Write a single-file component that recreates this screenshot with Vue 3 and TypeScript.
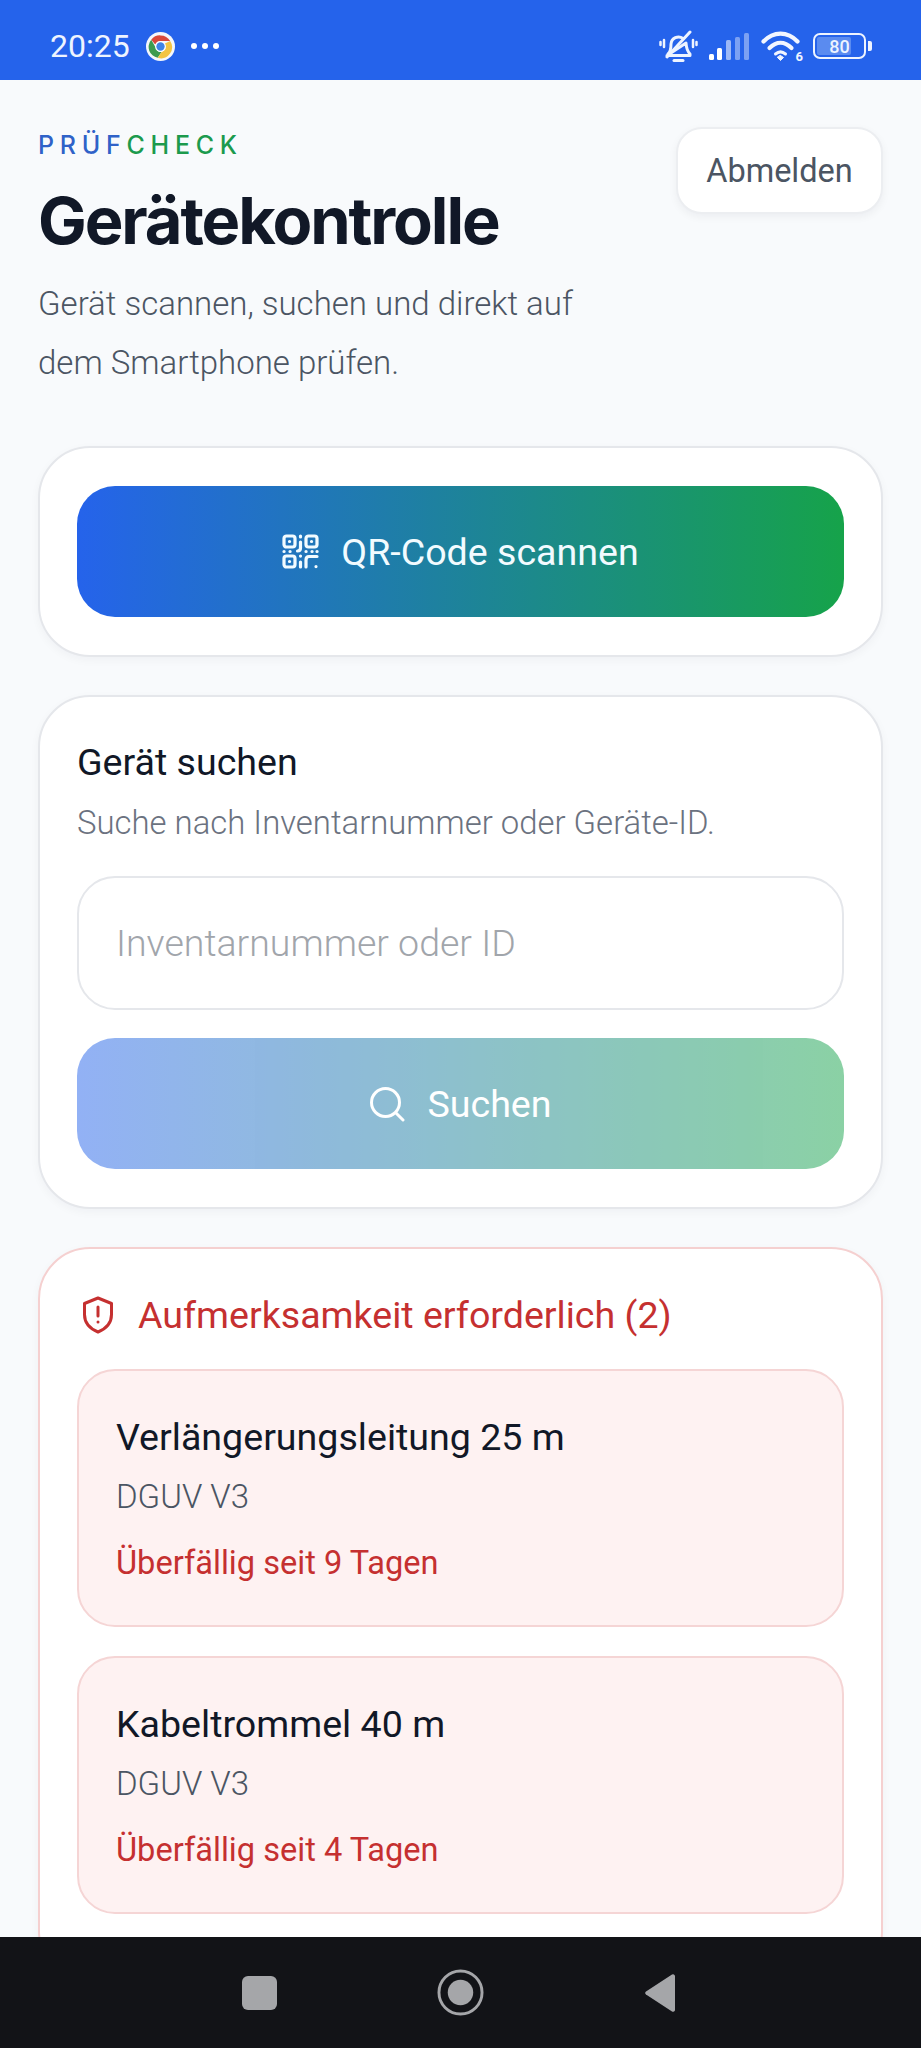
<template>
  <div class="phone">
    <div class="status-bar">
      <div class="status-left">
        <span class="clock">20:25</span>
        <svg class="chrome" viewBox="0 0 30 30" width="29" height="29">
          <circle cx="15" cy="15" r="15" fill="#f4f7fb" />
          <path d="M15 3.500a11.500 11.500 0 0 1 10 5.800H15a5.800 5.800 0 0 0-5.400 3.600L5.400 8A11.500 11.500 0 0 1 15 3.500z" fill="#d9483b" />
          <path d="M5.400 8l5 8.700a5.800 5.800 0 0 0 5.700 4l-4 6A11.500 11.500 0 0 1 5.400 8z" fill="#3d9b4f" />
          <path d="M25 9.300a11.500 11.500 0 0 1-12.900 17.400l4-6a5.800 5.800 0 0 0 4-6.500 5.800 5.800 0 0 0-1-2.100z" fill="#f3c443" />
          <circle cx="15" cy="15" r="5.600" fill="#fff" />
          <circle cx="15" cy="15" r="4.300" fill="#3f83e6" />
        </svg>
        <span class="dots"><i></i><i></i><i></i></span>
      </div>
      <div class="status-right">
        <svg viewBox="0 0 39 33" width="39" height="33" fill="none" stroke="#eef4ff" stroke-width="3" stroke-linecap="round" stroke-linejoin="round">
          <path d="M9 24c2.500-2 3-5 3-10a7.500 7.500 0 0 1 12-5.500M27 13c.3 4 1 8 4 11v1.500H8z" />
          <path d="M15 30.500h9" />
          <path d="M8 27 31 2" />
          <path d="M5 10v7M1.500 12v3M34 10v7M37.500 12v3" stroke-width="2.500" />
        </svg>
        <svg viewBox="0 0 41 27" width="41" height="27" fill="#fff">
          <rect x="0" y="21" width="5" height="6" rx="1.500" />
          <rect x="8" y="15" width="5" height="12" rx="1.500" />
          <rect x="17" y="7" width="5" height="20" rx="1.500" opacity=".55" />
          <rect x="26" y="4" width="5" height="23" rx="1.500" opacity=".4" />
          <rect x="35" y="0" width="5" height="27" rx="1.500" opacity=".4" />
        </svg>
        <span class="wifi">
          <svg viewBox="0 0 39 30" width="39" height="30" fill="none" stroke="#f2f6ff" stroke-width="4.200" stroke-linecap="round">
            <path d="M2.500 10.500c10-10.500 24-10.500 34 0" />
            <path d="M8.500 17c7-7 15-7 22 0" />
            <path d="M14.500 23c3.500-3 6.500-3 10 0" stroke-width="3" />
            <path d="M16.500 26.500l3 3 3-3-3-2z" fill="#f2f6ff" stroke-width="1" />
          </svg>
          <span class="wifi-num">6</span>
        </span>
        <span class="battery">
          <span class="battery-body">
            <span class="battery-fill"></span>
            <span class="battery-num">80</span>
          </span>
          <i class="battery-tip"></i>
        </span>
      </div>
    </div>

    <main class="page">
      <header class="head">
        <div class="head-text">
          <p class="brand"><span class="brand-blue">PRÜF</span><span class="brand-green">CHECK</span></p>
          <h1>Gerätekontrolle</h1>
          <p class="lead">Gerät scannen, suchen und direkt auf dem Smartphone prüfen.</p>
        </div>
        <button class="logout">Abmelden</button>
      </header>

      <section class="card">
        <button class="action scan">
          <svg viewBox="0 0 37 35" width="37" height="35" fill="none" stroke="#f2fbff" stroke-width="3.200" stroke-linecap="round" stroke-linejoin="round">
            <rect x="2" y="2" width="11" height="11" rx="2.500" />
            <rect x="24" y="2" width="11" height="11" rx="2.500" />
            <rect x="2" y="22" width="11" height="11" rx="2.500" />
            <path d="M7.500 7.500h.1M29.500 7.500h.1M7.500 27.500h.1" />
            <path d="M18.500 2v1M18.500 8v6c0 2-1 3-3 3M2 17.500h.1M8 17.500h.1M24 17.500h.1M30 17.500h.1M35 17.500h.1M18.500 22v.1M18.500 28v5M24 33v-7c0-2 1-3.500 3-3.500h8M34 32.500v.1" />
          </svg>
          QR-Code scannen
        </button>
      </section>

      <section class="card">
        <h2>Gerät suchen</h2>
        <p class="hint">Suche nach Inventarnummer oder Geräte-ID.</p>
        <input class="field" type="text" placeholder="Inventarnummer oder ID" />
        <button class="action find">
          <svg viewBox="0 0 36 36" width="36" height="36" fill="none" stroke="#fff" stroke-width="3" stroke-linecap="round">
            <circle cx="16.500" cy="16.500" r="14" />
            <path d="M27 27l7 7" />
          </svg>
          Suchen
        </button>
      </section>

      <section class="card alert">
        <h2 class="alert-title">
          <svg viewBox="0 0 32 38" width="32" height="38" fill="none" stroke="#c53030" stroke-width="3" stroke-linecap="round" stroke-linejoin="round">
            <path d="M16 2l13.500 5.500v11c0 8.500-5 14-13.500 17.500C7.500 32.500 2.500 27 2.500 18.500v-11z" />
            <path d="M16 11v9M16 26v.1" />
          </svg>
          Aufmerksamkeit erforderlich (2)
        </h2>
        <article v-for="item in overdue" :key="item.name" class="overdue">
          <h3>{{ item.name }}</h3>
          <p class="norm">{{ item.norm }}</p>
          <p class="late">Überfällig seit {{ item.days }} Tagen</p>
        </article>
      </section>
    </main>

    <nav class="nav-bar">
      <i class="nav-square"></i>
      <svg viewBox="0 0 48 48" width="47" height="47">
        <circle cx="24" cy="24" r="22" fill="none" stroke="#a5a6a9" stroke-width="3" />
        <circle cx="24" cy="24" r="13" fill="#a5a6a9" />
      </svg>
      <svg viewBox="0 0 32 40" width="32" height="40">
        <path d="M28 1.500 2 18.500a2 2 0 0 0 0 3l26 17a2 2 0 0 0 3-1.500V3a2 2 0 0 0-3-1.500z" fill="#a5a6a9" />
      </svg>
    </nav>
  </div>
</template>

<script setup lang="ts">
const overdue = [
  { name: 'Verlängerungsleitung 25 m', norm: 'DGUV V3', days: 9 },
  { name: 'Kabeltrommel 40 m', norm: 'DGUV V3', days: 4 },
]
</script>

<style>
html, body {
  margin: 0;
  background: #f8fafc;
}
</style>

<style scoped>
.phone {
  width: 921px;
  height: 2048px;
  display: flex;
  flex-direction: column;
  overflow: hidden;
  background: #f8fafc;
  font-family: Roboto, sans-serif;
  color: #111827;
}

.status-bar {
  flex: none;
  height: 80px;
  box-sizing: border-box;
  padding: 12px 49px 0 50px;
  display: flex;
  align-items: center;
  justify-content: space-between;
  background: #2563eb;
  color: #eef4ff;
}
.status-left {
  display: flex;
  align-items: center;
}
.clock {
  font-size: 32px;
  font-weight: 400;
  width: 96px;
}
.chrome {
  margin-right: 16px;
}
.dots {
  display: flex;
  gap: 5px;
}
.dots i {
  width: 6px;
  height: 6px;
  border-radius: 50%;
  background: #fff;
}
.status-right {
  display: flex;
  align-items: center;
  gap: 11px;
}
.wifi {
  position: relative;
  display: flex;
  margin-right: 2px;
}
.wifi-num {
  position: absolute;
  right: -3px;
  bottom: -3px;
  font-size: 13px;
  font-weight: 700;
}
.battery {
  display: flex;
  align-items: center;
  gap: 2px;
}
.battery-body {
  position: relative;
  box-sizing: border-box;
  width: 53px;
  height: 26px;
  border: 2.500px solid #eef4ff;
  border-radius: 7px;
  display: flex;
  align-items: center;
  justify-content: center;
}
.battery-fill {
  position: absolute;
  left: 2px;
  top: 2px;
  bottom: 2px;
  width: 34px;
  border-radius: 2px;
  background: #5a8bf0;
}
.battery-num {
  position: relative;
  font-size: 18px;
  font-weight: 500;
}
.battery-tip {
  width: 4px;
  height: 10px;
  border-radius: 0 2px 2px 0;
  background: #eef4ff;
}

.page {
  flex: 1;
  min-height: 0;
  overflow: hidden;
  box-sizing: border-box;
  padding: 50px 38px 0;
  display: flex;
  flex-direction: column;
  gap: 38px;
}

.head {
  display: flex;
  justify-content: space-between;
  align-items: flex-start;
  margin-bottom: 16px;
}
.head-text {
  width: 570px;
}
.brand {
  margin: 0;
  font-family: Inter, sans-serif;
  font-size: 25px;
  line-height: 30px;
  font-weight: 450;
  letter-spacing: 0.23em;
}
.brand-blue {
  color: #2f62c8;
}
.brand-green {
  color: #1c9a4d;
}
h1 {
  margin: 22px 0 14px;
  font-family: Inter, sans-serif;
  font-size: 65px;
  line-height: 78px;
  font-weight: 650;
  letter-spacing: -0.032em;
  color: #111827;
}
.lead {
  margin: 0;
  font-size: 33px;
  line-height: 59px;
  font-weight: 300;
  color: #4b5563;
}
.logout {
  margin-top: -3px;
  width: 207px;
  height: 87px;
  border: 2px solid #eceef1;
  border-radius: 26px;
  background: #fff;
  box-shadow: 0 3px 8px rgba(15, 23, 42, 0.05);
  font-family: Roboto, sans-serif;
  font-size: 32.500px;
  color: #4b5563;
}

.card {
  box-sizing: border-box;
  padding: 38px 37px;
  background: #fff;
  border: 2px solid #e5e7eb;
  border-radius: 52px;
  box-shadow: 0 3px 10px rgba(15, 23, 42, 0.04);
}
.action {
  width: 100%;
  height: 131px;
  border: 0;
  border-radius: 38px;
  display: flex;
  align-items: center;
  justify-content: center;
  gap: 22px;
  font-family: Roboto, sans-serif;
  font-size: 37.600px;
  font-weight: 450;
  color: #f2fbff;
  background: linear-gradient(90deg, #2563eb, #16a34a);
}
.find {
  margin-top: 28px;
  opacity: 0.5;
  color: #fff;
}
h2 {
  margin: 4px 0 0;
  font-size: 37.600px;
  line-height: 46px;
  font-weight: 450;
  color: #111827;
}
.hint {
  margin: 17px 0 32px;
  font-size: 32.900px;
  line-height: 42px;
  font-weight: 300;
  color: #6b7280;
}
.field {
  display: block;
  width: 100%;
  height: 134px;
  box-sizing: border-box;
  padding: 0 37px;
  border: 2px solid #e5e7eb;
  border-radius: 38px;
  background: #fff;
  font-family: Roboto, sans-serif;
  font-size: 37.500px;
  font-weight: 300;
  outline: 0;
}
.field::placeholder {
  color: #a1a5ab;
  opacity: 1;
}

.alert {
  flex: none;
  border-color: #f5d0d0;
}
.alert-title {
  display: flex;
  align-items: center;
  gap: 24px;
  margin: 5px 0 31px;
  padding-left: 5px;
  font-size: 37.600px;
  color: #c53030;
}
.overdue {
  box-sizing: border-box;
  height: 258px;
  padding: 42px 37px;
  margin-bottom: 29px;
  background: #fef2f2;
  border: 2px solid #f5d5d5;
  border-radius: 38px;
}
h3 {
  margin: 0;
  font-size: 37.600px;
  line-height: 48px;
  font-weight: 450;
  color: #111827;
}
.norm {
  margin: 15px 0 0;
  font-size: 33px;
  line-height: 42px;
  font-weight: 300;
  color: #4b5563;
}
.late {
  margin: 24px 0 0;
  font-size: 32.600px;
  line-height: 42px;
  color: #c53030;
}

.nav-bar {
  flex: none;
  height: 111px;
  box-sizing: border-box;
  padding-right: 4px;
  display: flex;
  align-items: center;
  justify-content: center;
  gap: 160px;
  background: #121317;
}
.nav-square {
  width: 35px;
  height: 34px;
  border-radius: 6px;
  background: #a5a6a9;
}
</style>
